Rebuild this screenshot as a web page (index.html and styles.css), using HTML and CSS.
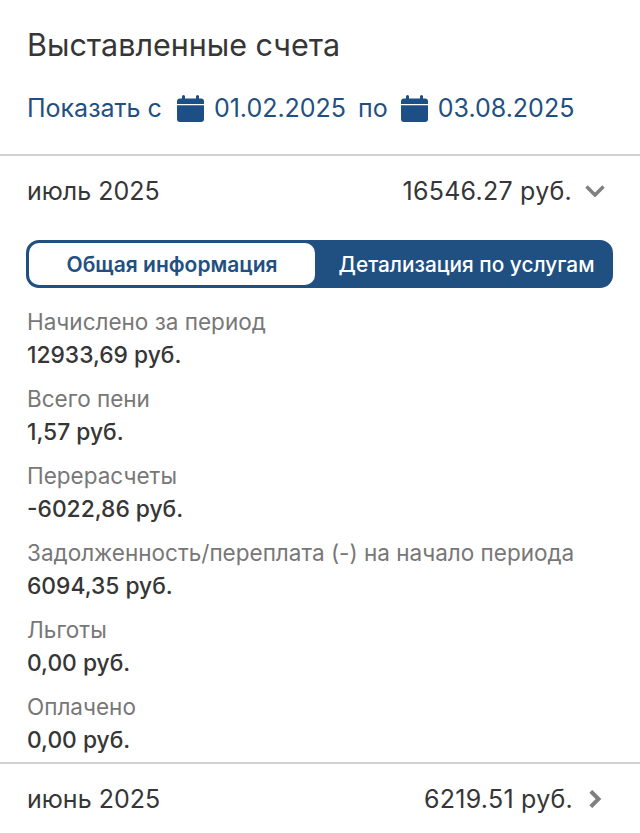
FILE: index.html
```html
<!DOCTYPE html>
<html lang="ru">
<head>
<meta charset="utf-8">
<title>Выставленные счета</title>
<link rel="stylesheet" href="styles.css">
</head>
<body>
<header class="head">
  <h1 class="title">Выставленные счета</h1>
  <div class="filter">
    <span class="from">Показать с</span>
    <span class="date">
      <svg class="cal" viewBox="0 0 27 27"><path d="M6.500 0a1.500 1.500 0 0 1 1.500 1.500v2h11v-2a1.500 1.500 0 0 1 3 0v2h2a3 3 0 0 1 3 3v2.500h-27v-2.500a3 3 0 0 1 3-3h2v-2a1.500 1.500 0 0 1 1.500-1.500z"/><path d="M0 10.200h27v13.800a3 3 0 0 1-3 3h-21a3 3 0 0 1-3-3z"/></svg>
      <span>01.02.2025</span>
    </span>
    <span class="to">по</span>
    <span class="date">
      <svg class="cal" viewBox="0 0 27 27"><path d="M6.500 0a1.500 1.500 0 0 1 1.500 1.500v2h11v-2a1.500 1.500 0 0 1 3 0v2h2a3 3 0 0 1 3 3v2.500h-27v-2.500a3 3 0 0 1 3-3h2v-2a1.500 1.500 0 0 1 1.500-1.500z"/><path d="M0 10.200h27v13.800a3 3 0 0 1-3 3h-21a3 3 0 0 1-3-3z"/></svg>
      <span>03.08.2025</span>
    </span>
  </div>
</header>

<section class="month open">
  <div class="month-row">
    <span>июль 2025</span>
    <span class="sum"><span class="amount">16546.27 руб.</span>
      <svg class="chev down" viewBox="0 0 20 12"><path d="M1.500 1.500l8.500 8.500 8.500-8.500"/></svg>
    </span>
  </div>
  <div class="tabs">
    <div class="tab active">Общая информация</div>
    <div class="tab">Детализация по услугам</div>
  </div>
  <dl class="facts">
    <div class="fact"><dt>Начислено за период</dt><dd>12933,69 руб.</dd></div>
    <div class="fact"><dt>Всего пени</dt><dd>1,57 руб.</dd></div>
    <div class="fact"><dt>Перерасчеты</dt><dd>-6022,86 руб.</dd></div>
    <div class="fact"><dt>Задолженность/переплата (-) на начало периода</dt><dd>6094,35 руб.</dd></div>
    <div class="fact"><dt>Льготы</dt><dd>0,00 руб.</dd></div>
    <div class="fact"><dt>Оплачено</dt><dd>0,00 руб.</dd></div>
  </dl>
</section>

<section class="month">
  <div class="month-row">
    <span>июнь 2025</span>
    <span class="sum"><span class="amount">6219.51 руб.</span>
      <svg class="chev right" viewBox="0 0 13 18"><path d="M1.800 1.300l7.700 7.700-7.700 7.700"/></svg>
    </span>
  </div>
</section>
</body>
</html>
```

FILE: styles.css
```css
* { box-sizing: border-box; }
html, body { margin: 0; padding: 0; }
body {
  width: 640px;
  height: 833px;
  overflow: hidden;
  background: #fff;
  color: #363636;
  font-family: Inter, "Noto Sans", sans-serif;
}
.head { padding: 26px 27px 0; height: 154px; }
.title { margin: 0; font-size: 30.500px; line-height: 38px; font-weight: 400; color: #363636; }
.filter {
  display: flex;
  align-items: center;
  margin-top: 25px;
  font-size: 25px;
  line-height: 38px;
  color: #1f5081;
}
.from { margin-right: 15px; }
.to { margin: 0 13px 0 12px; }
.date { display: inline-flex; align-items: center; gap: 10px; }
.cal { width: 27px; height: 27px; fill: #1c4f86; }
.month { border-top: 2px solid #d2d2d2; }
.open { height: 608px; }
.month-row {
  display: flex;
  justify-content: space-between;
  align-items: center;
  height: 70px;
  padding: 0 35px 0 27px;
  font-size: 25px;
}
.sum { display: inline-flex; align-items: center; gap: 13px; }
.amount { letter-spacing: 0.250px; }
.chev { fill: none; stroke: #808080; stroke-width: 3.500; }
.chev.down { width: 20px; height: 12px; }
.chev.right { width: 13px; height: 18px; margin: 0 3px; stroke-width: 4; }
.tabs {
  display: flex;
  height: 48px;
  margin: 14px 27px 0 26px;
  border: 3px solid #1f5081;
  border-radius: 13px;
  background: #1f5081;
  font-size: 20.800px;
  font-weight: 500;
}
.tab { display: flex; align-items: center; justify-content: center; color: #fff; flex: 1; padding-left: 8px; }
.tab.active { flex: 0 0 286px; padding-left: 0; background: #fff; color: #1f5081; border-radius: 10px; font-size: 21px; font-weight: 600; }
.facts { margin: 17px 27px 0; }
.fact { margin: 0 0 11px; height: 66px; }
.fact:last-child { margin-bottom: 0; }
dt { font-size: 22.500px; line-height: 34px; color: #777; }
dd { margin: 0; font-size: 22.800px; line-height: 32px; font-weight: 500; color: #363636; }
```
